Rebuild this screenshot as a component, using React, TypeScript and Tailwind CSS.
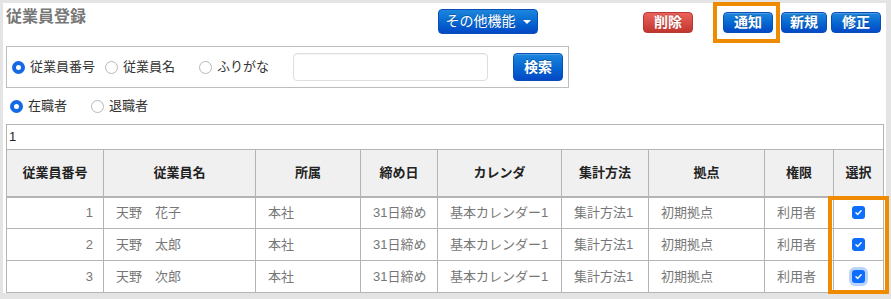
const rows = [
  { no: 1, name: "天野　花子" },
  { no: 2, name: "天野　太郎" },
  { no: 3, name: "天野　次郎" },
];

const headers = ["従業員番号", "従業員名", "所属", "締め日", "カレンダ", "集計方法", "拠点", "権限", "選択"];
const widths = [97, 152, 105, 77, 124, 87, 116, 69, 50];

function BlueButton({ label, className }: { label: string; className: string }) {
  return (
    <button
      className={
        "flex shrink-0 items-center justify-center rounded-[4px] border border-[#0a4fb8] bg-linear-to-b from-[#1c86dc] to-[#0548c6] text-white font-bold text-[14px] shadow-[inset_0_1px_0_rgba(255,255,255,0.2)] [text-shadow:0_-1px_0_rgba(0,0,0,0.25)] " +
        className
      }
    >
      {label}
    </button>
  );
}

function Radio({ checked }: { checked?: boolean }) {
  return checked ? (
    <span className="block w-[13px] h-[13px] rounded-full border-[4px] border-[#1469e6] bg-white shrink-0" />
  ) : (
    <span className="block w-[13px] h-[13px] rounded-full border border-[#b8b8b8] bg-white shrink-0" />
  );
}

function Check({ focus }: { focus?: boolean }) {
  return (
    <span
      className={
        "mx-auto flex w-[13px] h-[13px] items-center justify-center rounded-[3px] bg-[#0d6efd] " +
        (focus ? "ring-[3px] ring-[#b9d3fb]" : "")
      }
    >
      <svg width="9" height="9" viewBox="0 0 16 16">
        <path d="M3.5 8.5l3 3 6-6.5" fill="none" stroke="white" strokeWidth="2.6" strokeLinecap="round" strokeLinejoin="round" />
      </svg>
    </span>
  );
}

const cell = "border border-[#b4b4b4] px-[12px] whitespace-nowrap";

export default function App() {
  return (
    <div className="relative w-[891px] h-[299px] overflow-hidden bg-[#e4e4e4] pt-[3px] pl-[3px] pr-[5px] pb-[6px] font-['Liberation_Sans','Noto_Sans_CJK_JP',sans-serif]">
      <div className="w-full h-full bg-white pl-[3px]">
        {/* title and actions */}
        <div className="flex items-start h-[43px] whitespace-nowrap">
          <div className="w-[432px] shrink-0 pt-[2px] text-[16px] leading-[24px] font-bold text-[#777]">従業員登録</div>
          <button className="mt-[6px] flex shrink-0 items-center justify-center gap-[7px] w-[100px] h-[25px] rounded-[4px] border border-[#0a4fb8] bg-linear-to-b from-[#1c86dc] to-[#0548c6] text-white text-[14px] [text-shadow:0_-1px_0_rgba(0,0,0,0.25)]">
            その他機能
            <span className="w-0 h-0 border-x-[4px] border-x-transparent border-t-[4px] border-t-white" />
          </button>
          <button className="ml-[105px] mt-[9px] flex shrink-0 items-center justify-center w-[50px] h-[21px] rounded-[4px] border border-[#b33a35] bg-linear-to-b from-[#ee615b] to-[#c0362f] text-white font-bold text-[14px] [text-shadow:0_-1px_0_rgba(0,0,0,0.25)]">
            削除
          </button>
          <BlueButton label="通知" className="ml-[30px] mt-[9px] w-[50px] h-[21px]" />
          <BlueButton label="新規" className="ml-[8px] mt-[9px] w-[46px] h-[21px]" />
          <BlueButton label="修正" className="ml-[4px] mt-[9px] w-[50px] h-[21px]" />
        </div>

        {/* search box */}
        <div className="flex items-center w-[563px] h-[42px] border border-[#bdbdbd] text-[13px] text-[#333] whitespace-nowrap">
          <span className="ml-[5px] shrink-0"><Radio checked /></span>
          <span className="ml-[5px] shrink-0">従業員番号</span>
          <span className="ml-[10px] shrink-0"><Radio /></span>
          <span className="ml-[5px] shrink-0">従業員名</span>
          <span className="ml-[24px] shrink-0"><Radio /></span>
          <span className="ml-[5px] shrink-0">ふりがな</span>
          <input className="ml-[24px] w-[195px] h-[28px] shrink-0 rounded-[4px] border border-[#dedede] shadow-[inset_0_1px_1px_rgba(0,0,0,0.05)] outline-none" />
          <BlueButton label="検索" className="ml-[25px] w-[50px] h-[28px]" />
        </div>

        {/* status */}
        <div className="flex items-center h-[36px] text-[13px] text-[#333] whitespace-nowrap">
          <span className="ml-[4px] shrink-0"><Radio checked /></span>
          <span className="ml-[5px] shrink-0">在職者</span>
          <span className="ml-[24px] shrink-0"><Radio /></span>
          <span className="ml-[5px] shrink-0">退職者</span>
        </div>

        {/* table */}
        <table className="w-[877px] border-collapse table-fixed text-[13px]">
          <colgroup>
            {widths.map((w, i) => (
              <col key={i} style={{ width: w }} />
            ))}
          </colgroup>
          <thead>
            <tr className="h-[25px]">
              <td colSpan={9} className="border border-[#b4b4b4] px-[2px] text-[13px] text-[#222] leading-[22px]">1</td>
            </tr>
            <tr className="h-[47px] bg-[#f0f0f0]">
              {headers.map((h) => (
                <th key={h} className="border border-[#b4b4b4] border-b-2 whitespace-nowrap font-bold text-[#222] text-center">
                  {h}
                </th>
              ))}
            </tr>
          </thead>
          <tbody className="text-[#777] leading-[20px]">
            {rows.map((r, i) => (
              <tr key={r.no} className="h-[32px]">
                <td className="border border-[#b4b4b4] px-[10px] text-right">{r.no}</td>
                <td className={cell}>{r.name}</td>
                <td className={cell}>本社</td>
                <td className={cell}>31日締め</td>
                <td className={cell}>基本カレンダー1</td>
                <td className={cell}>集計方法1</td>
                <td className={cell}>初期拠点</td>
                <td className={cell}>利用者</td>
                <td className="border border-[#b4b4b4] text-center">
                  <Check focus={i === 2} />
                </td>
              </tr>
            ))}
          </tbody>
        </table>
      </div>

      {/* highlight marks */}
      <div className="absolute left-[713px] top-[2px] w-[67px] h-[41px] border-[4px] border-[#ef8b00]" />
      <div className="absolute left-[828px] top-[196px] w-[61px] h-[98px] border-[4px] border-[#ef8b00]" />
    </div>
  );
}
